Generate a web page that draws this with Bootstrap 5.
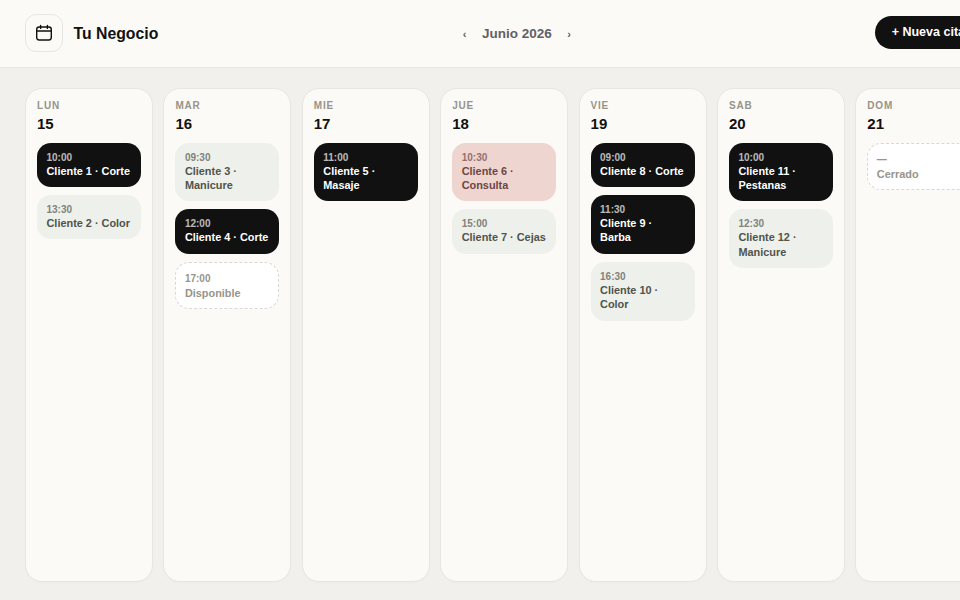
<!DOCTYPE html>
<html lang="es">
<head>
  <meta charset="UTF-8" />
  <meta name="viewport" content="width=device-width, initial-scale=1.0">
  <title>Agenda</title>
  <link href="https://cdn.jsdelivr.net/npm/bootstrap@5.3.2/dist/css/bootstrap.min.css" rel="stylesheet">
  <style>
    html, body {
      height: 100%;
      overflow: hidden;
    }
    body {
      background-color: #f1f0ec;
      font-family: "Liberation Sans", Arial, sans-serif;
      color: #111;
    }
    .app-shell {
      width: 1007px;
      height: 600px;
    }
    .top-bar {
      height: 68px;
      padding: 0 25px 2px;
      background-color: #fbfaf7;
      border-bottom: 1px solid #e8e6e1;
    }
    .logo-box {
      width: 38px;
      height: 38px;
      background-color: #fbfaf7;
      border: 1px solid #e8e6e1;
      border-radius: 11px;
    }
    .brand-name {
      font-size: 15.8px;
      font-weight: 700;
      margin-left: 10.5px;
      margin-top: 3px;
    }
    .month-nav {
      width: 108px;
      margin-left: 304.5px;
      margin-top: 4px;
      color: #5f6068;
      font-size: 13.5px;
      font-weight: 700;
    }
    .month-arrow {
      font-size: 11px;
    }
    .new-btn {
      margin-left: auto;
      margin-top: -1px;
      height: 33px;
      padding: 1px 17px 0;
      background-color: #111;
      color: #fff;
      border: 0;
      border-radius: 17px;
      font-size: 12.5px;
      font-weight: 700;
      white-space: nowrap;
    }
    .week-grid {
      display: grid;
      grid-template-columns: repeat(7, 128px);
      gap: 10.4px;
      padding: 20px 0 0 25px;
    }
    .day-col {
      height: 494px;
      padding: 11px 11px 10px;
      background-color: #fbfaf7;
      border: 1px solid #e8e6e1;
      border-radius: 17px;
      box-shadow: 0 1px 2px rgba(0, 0, 0, .02);
    }
    .day-name {
      font-size: 10px;
      font-weight: 700;
      line-height: 12px;
      letter-spacing: .8px;
      color: #97948a;
    }
    .day-num {
      font-size: 15px;
      font-weight: 700;
      line-height: 20px;
      margin-top: 2px;
      margin-bottom: 8.5px;
    }
    .appt {
      padding: 8px 9.5px 9px;
      margin-bottom: 8.3px;
      border-radius: 14px;
      font-size: 10.9px;
      font-weight: 700;
      line-height: 14.3px;
    }
    .appt-time {
      font-size: 10px;
      line-height: 13px;
      opacity: .7;
    }
    .appt-dark {
      background-color: #111;
      color: #fff;
    }
    .appt-soft {
      background-color: #eef0eb;
      color: #4f544c;
    }
    .appt-rose {
      background-color: #eed5d0;
      color: #6d4644;
    }
    .appt-open {
      padding: 9px 8.5px 8px;
      background-color: #fff;
      border: 1px dashed #d9d7d0;
      color: #97948a;
    }
    .appt-open .appt-time {
      margin-bottom: 1px;
      opacity: 1;
    }
  </style>
</head>
<body>
  <div class="app-shell">
    <!-- Header -->
    <header class="top-bar d-flex align-items-center">
      <div class="logo-box d-flex align-items-center justify-content-center">
        <svg width="18" height="18" viewBox="0 0 18 18" fill="none" stroke="#111" stroke-width="1.4" stroke-linecap="round">
          <rect x="1.7" y="3" width="14.6" height="13" rx="2.4"/>
          <path d="M1.7 7h14.6M5.6 1.4v3M12.4 1.4v3"/>
        </svg>
      </div>
      <span class="brand-name">Tu Negocio</span>
      <div class="month-nav d-flex align-items-center justify-content-between">
        <span class="month-arrow">‹</span>
        <span>Junio 2026</span>
        <span class="month-arrow">›</span>
      </div>
      <button class="new-btn" type="button">+ Nueva cita</button>
    </header>

    <!-- Week -->
    <main class="week-grid">
      <section class="day-col">
        <div class="day-name">LUN</div>
        <div class="day-num">15</div>
        <div class="appt appt-dark"><div class="appt-time">10:00</div>Cliente 1 · Corte</div>
        <div class="appt appt-soft"><div class="appt-time">13:30</div>Cliente 2 · Color</div>
      </section>
      <section class="day-col">
        <div class="day-name">MAR</div>
        <div class="day-num">16</div>
        <div class="appt appt-soft"><div class="appt-time">09:30</div>Cliente 3 · Manicure</div>
        <div class="appt appt-dark"><div class="appt-time">12:00</div>Cliente 4 · Corte</div>
        <div class="appt appt-open"><div class="appt-time">17:00</div>Disponible</div>
      </section>
      <section class="day-col">
        <div class="day-name">MIE</div>
        <div class="day-num">17</div>
        <div class="appt appt-dark"><div class="appt-time">11:00</div>Cliente 5 · Masaje</div>
      </section>
      <section class="day-col">
        <div class="day-name">JUE</div>
        <div class="day-num">18</div>
        <div class="appt appt-rose"><div class="appt-time">10:30</div>Cliente 6 · Consulta</div>
        <div class="appt appt-soft"><div class="appt-time">15:00</div>Cliente 7 · Cejas</div>
      </section>
      <section class="day-col">
        <div class="day-name">VIE</div>
        <div class="day-num">19</div>
        <div class="appt appt-dark"><div class="appt-time">09:00</div>Cliente 8 · Corte</div>
        <div class="appt appt-dark"><div class="appt-time">11:30</div>Cliente 9 · Barba</div>
        <div class="appt appt-soft"><div class="appt-time">16:30</div>Cliente 10 · Color</div>
      </section>
      <section class="day-col">
        <div class="day-name">SAB</div>
        <div class="day-num">20</div>
        <div class="appt appt-dark"><div class="appt-time">10:00</div>Cliente 11 · Pestanas</div>
        <div class="appt appt-soft"><div class="appt-time">12:30</div>Cliente 12 · Manicure</div>
      </section>
      <section class="day-col">
        <div class="day-name">DOM</div>
        <div class="day-num">21</div>
        <div class="appt appt-open"><div class="appt-time">—</div>Cerrado</div>
      </section>
    </main>
  </div>
  <script src="https://cdn.jsdelivr.net/npm/bootstrap@5.3.2/dist/js/bootstrap.bundle.min.js"></script>
</body>
</html>
